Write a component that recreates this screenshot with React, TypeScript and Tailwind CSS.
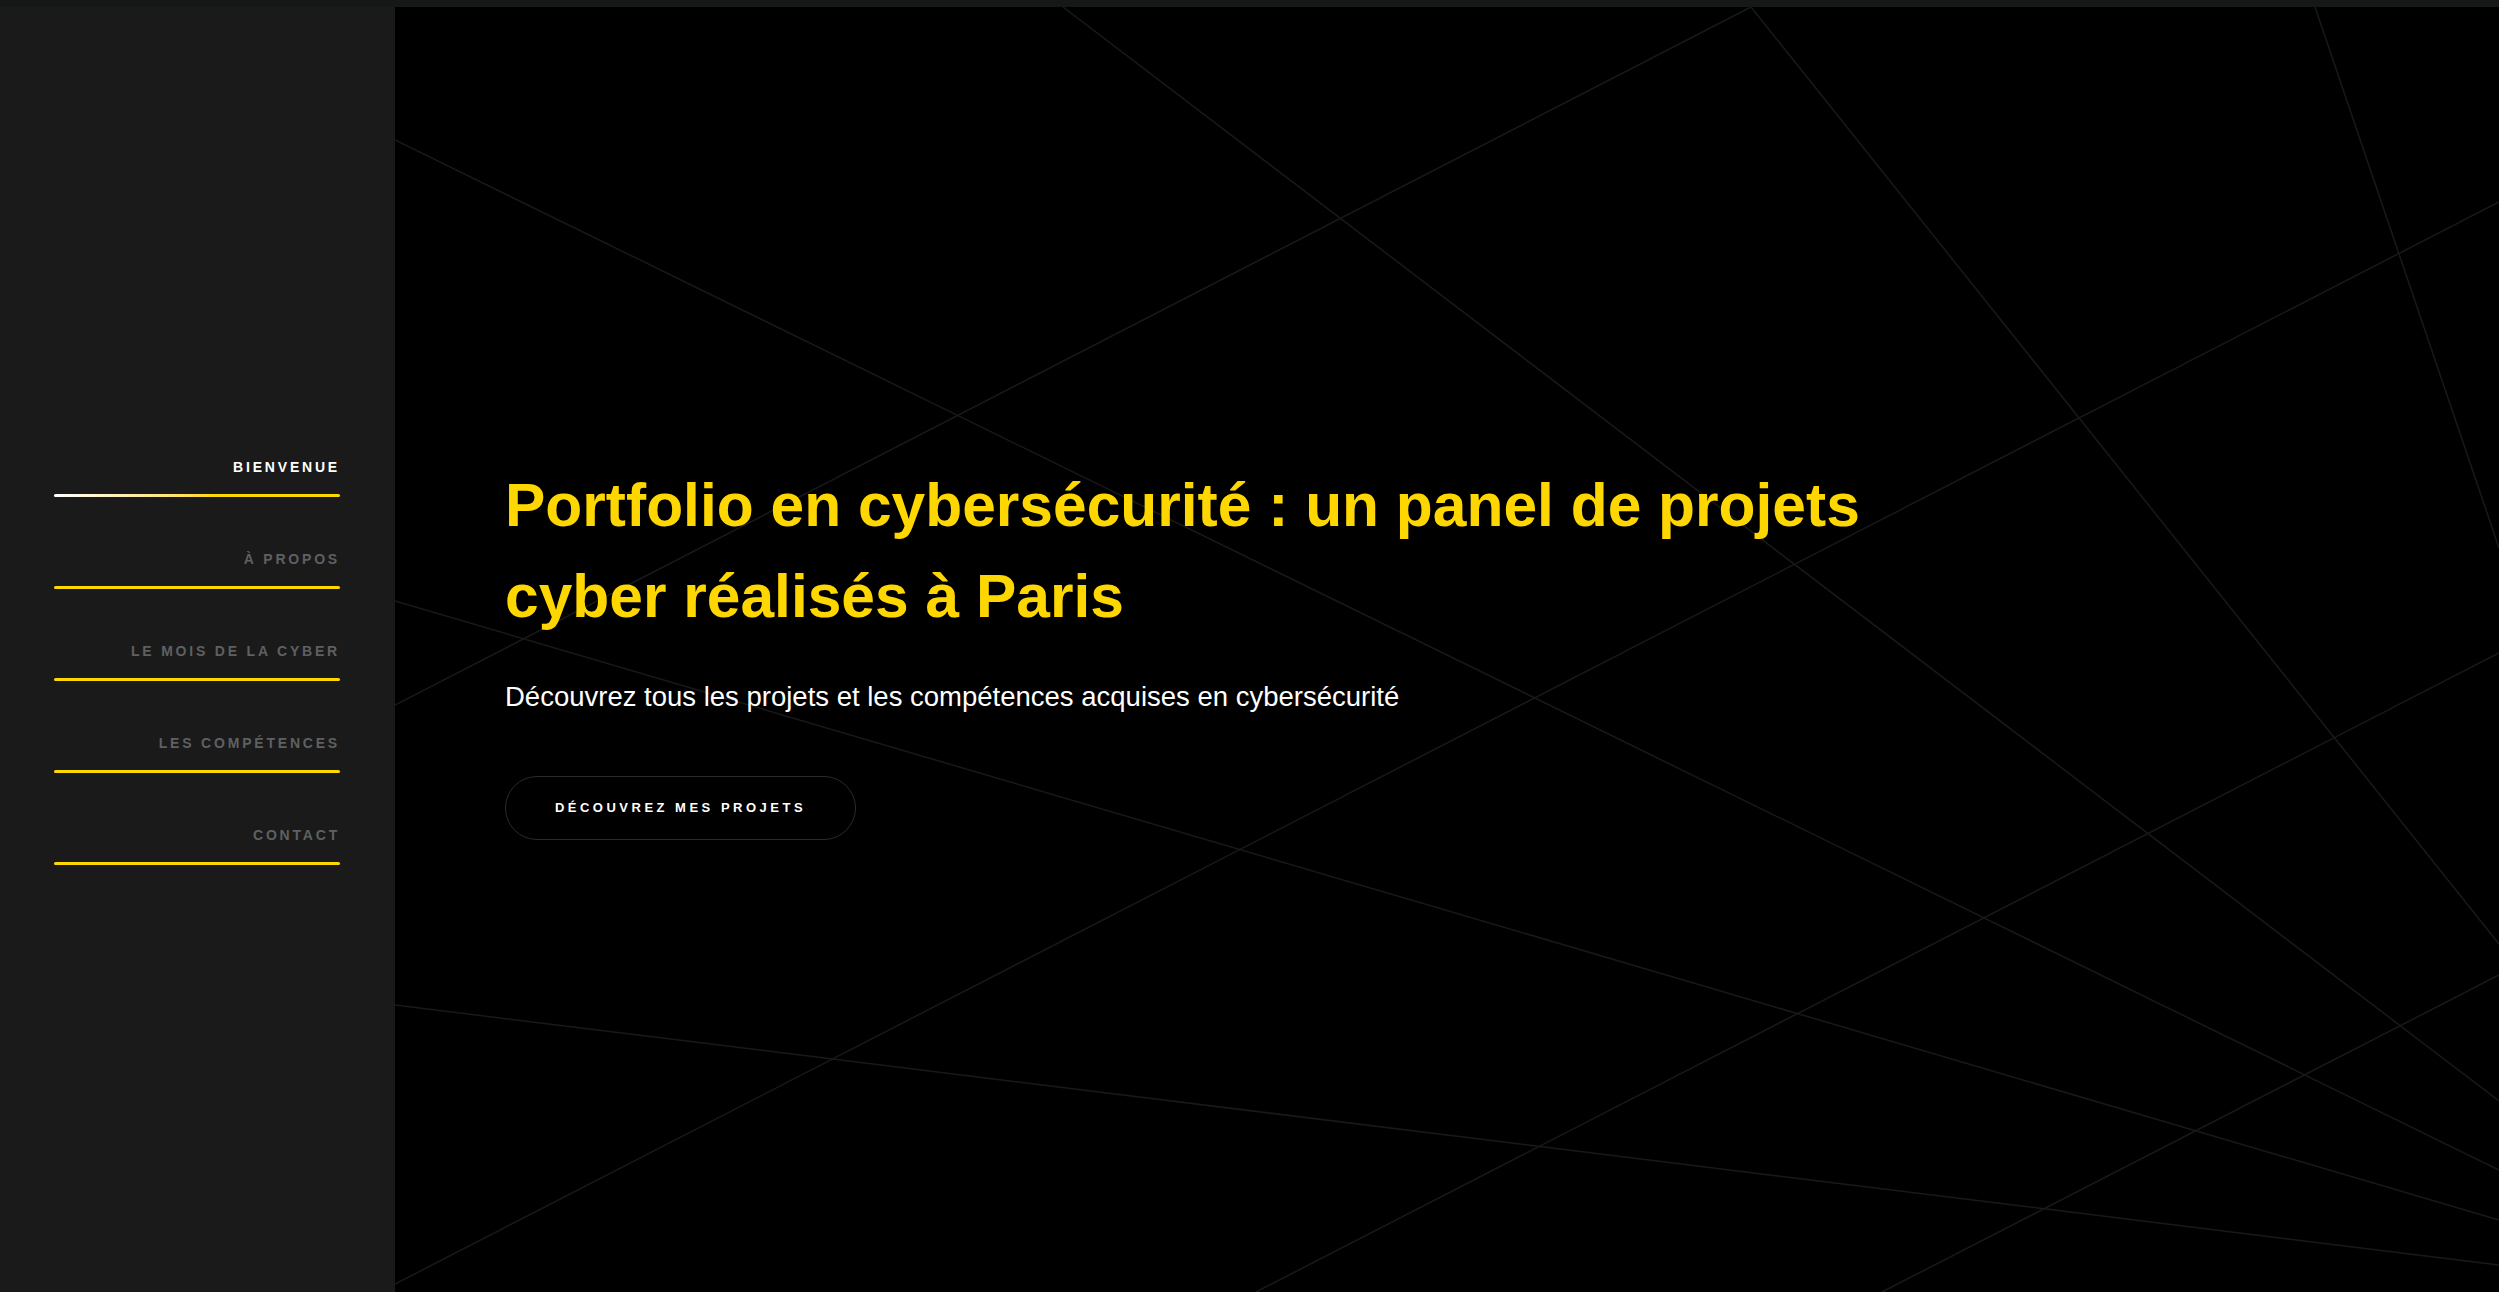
import React from "react";

const navItems = [
  { label: "BIENVENUE", active: true },
  { label: "À PROPOS", active: false },
  { label: "LE MOIS DE LA CYBER", active: false },
  { label: "LES COMPÉTENCES", active: false },
  { label: "CONTACT", active: false },
];

const lines: [number, number, number, number][] = [
  [668, 0, 2104, 1094],
  [1356, 0, 0, 698],
  [1356, 0, 2104, 937],
  [1920, 0, 2104, 541],
  [0, 133, 2104, 1163],
  [0, 594, 2104, 1213],
  [0, 998, 2104, 1258],
  [0, 1277, 2104, 195],
  [861, 1285, 2104, 646],
  [1487, 1285, 2104, 968],
];

export default function App() {
  return (
    <div className="h-[1292px] w-full flex flex-col font-['Liberation_Sans',Arial,sans-serif] overflow-hidden">
      <div className="h-[7px] w-full bg-[#161717] shrink-0" />
      <div className="flex flex-1 min-h-0">
        <aside className="w-[395px] shrink-0 bg-[#1a1a1a] pl-[54px] pr-[55px] pt-[450px]">
          <nav className="flex flex-col gap-[52px]">
            {navItems.map((item) => (
              <div key={item.label} className="flex flex-col">
                <span
                  className={
                    "text-right text-[14px] leading-5 font-bold tracking-[2.8px] " +
                    (item.active ? "text-white" : "text-[#5f6061]")
                  }
                >
                  {item.label}
                </span>
                {item.active ? (
                  <div className="mt-[17px] h-[3px] w-full rounded-sm bg-gradient-to-r from-white via-[#ffd700] via-55% to-[#ffd700]" />
                ) : (
                  <div className="mt-[17px] h-[3px] w-full rounded-sm bg-[#ffd700]" />
                )}
              </div>
            ))}
          </nav>
        </aside>
        <main className="relative flex-1 bg-black overflow-hidden">
          <svg
            className="absolute inset-0 h-full w-full"
            viewBox="0 0 2104 1285"
            preserveAspectRatio="none"
          >
            {lines.map(([x1, y1, x2, y2], i) => (
              <line
                key={i}
                x1={x1}
                y1={y1}
                x2={x2}
                y2={y2}
                stroke="#191919"
                strokeWidth={1.5}
              />
            ))}
          </svg>
          <div className="relative pl-[110px] pt-[453px]">
            <h1 className="text-[60.5px] leading-[91px] font-bold text-[#ffd700]">
              Portfolio en cybersécurité : un panel de projets
              <br />
              cyber réalisés à Paris
            </h1>
            <p className="mt-[35px] text-[27.5px] leading-[40px] text-white">
              Découvrez tous les projets et les compétences acquises en cybersécurité
            </p>
            <button className="mt-[59px] h-[64px] w-[351px] rounded-full border border-[#2a2a2a] bg-black text-[13px] font-bold tracking-[3.5px] text-white">
              DÉCOUVREZ MES PROJETS
            </button>
          </div>
        </main>
      </div>
    </div>
  );
}
